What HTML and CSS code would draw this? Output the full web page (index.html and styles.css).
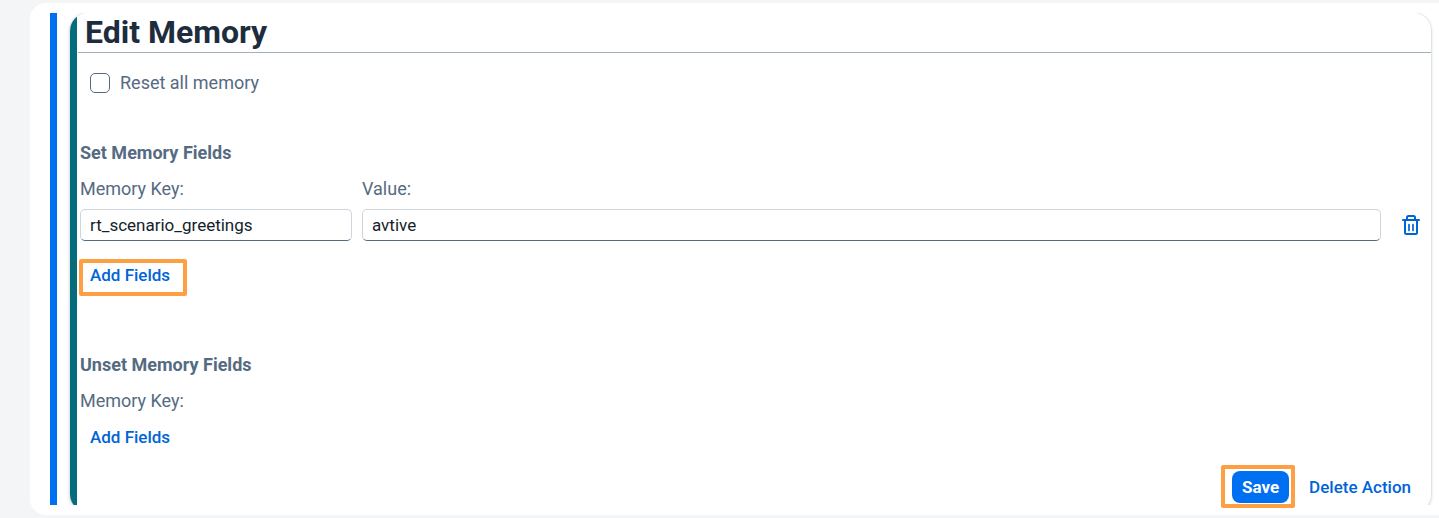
FILE: index.html
```html
<!DOCTYPE html>
<html lang="en">
<head>
<meta charset="utf-8">
<title>Edit Memory</title>
<link rel="stylesheet" href="styles.css">
</head>
<body>
<main class="panel">
  <div class="accent"></div>
  <section class="card">
    <div class="frame-clip"><div class="frame"></div></div>
    <form class="content">
      <h1 class="title">Edit Memory</h1>
      <label class="reset"><input class="checkbox" type="checkbox">Reset all memory</label>

      <section class="group">
        <h2 class="heading">Set Memory Fields</h2>
        <div class="fields">
          <label class="label" for="key">Memory Key:</label>
          <label class="label label-value" for="value">Value:</label>
          <input class="input" id="key" type="text" value="rt_scenario_greetings">
          <input class="input" id="value" type="text" value="avtive">
          <button class="remove" type="button" aria-label="Delete field">
            <svg width="18" height="20" viewBox="0 0 18 20" fill="none" stroke="currentColor" stroke-width="2" stroke-linejoin="round" stroke-linecap="round">
              <path d="M1 5h16M3 5v12.500a1.500 1.500 0 0 0 1.500 1.500h9a1.500 1.500 0 0 0 1.500-1.500V5M5 5V2.500a1.500 1.500 0 0 1 1.500-1.500h5a1.500 1.500 0 0 1 1.500 1.500V5"/>
              <path d="M7 9.500v6M11 9.500v6" stroke-width="1.700"/>
            </svg>
          </button>
        </div>
        <button class="button marked marked-add" type="button">Add Fields</button>
      </section>

      <section class="group group-unset">
        <h2 class="heading">Unset Memory Fields</h2>
        <p class="label">Memory Key:</p>
        <button class="button" type="button">Add Fields</button>
      </section>

      <footer class="actions">
        <button class="button primary marked marked-save" type="button">Save</button>
        <button class="button" type="button">Delete Action</button>
      </footer>
    </form>
  </section>
</main>
</body>
</html>
```
FILE: styles.css
```css
* { box-sizing: border-box; }
body {
  margin: 0;
  padding: 3px 0 3px 30px;
  background: #f4f5f7;
  color: #556b82;
  font: 18px/20px Roboto, "Liberation Sans", sans-serif;
}
.panel {
  display: flex;
  gap: 13px;
  padding: 10px 8px 10px 20px;
  background: #fff;
  border-radius: 16px 0 0 16px;
}
.accent { flex: none; width: 7px; background: #0070f2; }
.card { position: relative; flex: 1; min-width: 0; }
.frame-clip {
  position: absolute;
  inset: 0 -8px 0 -8px;
  overflow: hidden;
}
.frame {
  position: absolute;
  inset: 0 8px -7px 8px;
  border-radius: 18px;
  background: linear-gradient(to right, #046c7a 7px, #fff 7px);
  box-shadow: 0 0 2px rgba(34, 53, 72, 0.3), 0 2px 4px rgba(34, 53, 72, 0.15);
}
.content { position: relative; padding: 0 0 2px 8px; }
.title {
  margin: 0;
  padding: 0 7px;
  border-bottom: 1px solid #a3afbf;
  color: #1d2d3e;
  font-size: 32px;
  line-height: 39px;
}
.reset {
  display: flex;
  width: max-content;
  align-items: center;
  gap: 10px;
  margin: 20px 0 0 12px;
}
.checkbox {
  appearance: none;
  width: 20px;
  height: 20px;
  margin: 0;
  border: 1px solid #556b82;
  border-radius: 5px;
  background: #fff;
}
.checkbox:checked { background: #0070f2; }
.group { margin-top: 42px; padding-left: 2px; }
.group-unset { margin-top: 56px; }
.heading { margin: 0; font-size: 18px; line-height: 36px; }
.label { margin: 0 0 2px; line-height: 36px; }
.fields {
  display: grid;
  grid-template-columns: 272px 1fr 40px;
  column-gap: 10px;
  margin-bottom: 18px;
}
.label-value { grid-column: 2 / 4; }
.input {
  width: 100%;
  min-width: 0;
  height: 32px;
  padding: 0 9px;
  border: 1px solid #cfd5dc;
  border-bottom-color: #556b82;
  border-radius: 5px;
  background: #fff;
  color: #131e29;
  font: inherit;
  font-size: 17px;
}
.button, .remove {
  border: 0;
  background: none;
  color: #0064d9;
  font: inherit;
  cursor: pointer;
}
.button {
  position: relative;
  height: 32px;
  padding: 0 10px;
  border-radius: 8px;
  font-size: 17px;
  font-weight: 500;
}
.remove { display: grid; place-items: center; padding: 0; }
.group > .button { display: block; }
.actions {
  display: flex;
  justify-content: flex-end;
  gap: 10px;
  margin-top: 18px;
  padding-right: 10px;
}
.primary { background: #0070f2; color: #fff; font-weight: 700; }
.marked::after {
  content: "";
  position: absolute;
  border: 4px solid #fd9f42;
  border-radius: 2px;
}
.marked-add::after { inset: 0 -7px -5px -1px; }
.marked-save::after { inset: -6px -6px -5px -11px; }
```
